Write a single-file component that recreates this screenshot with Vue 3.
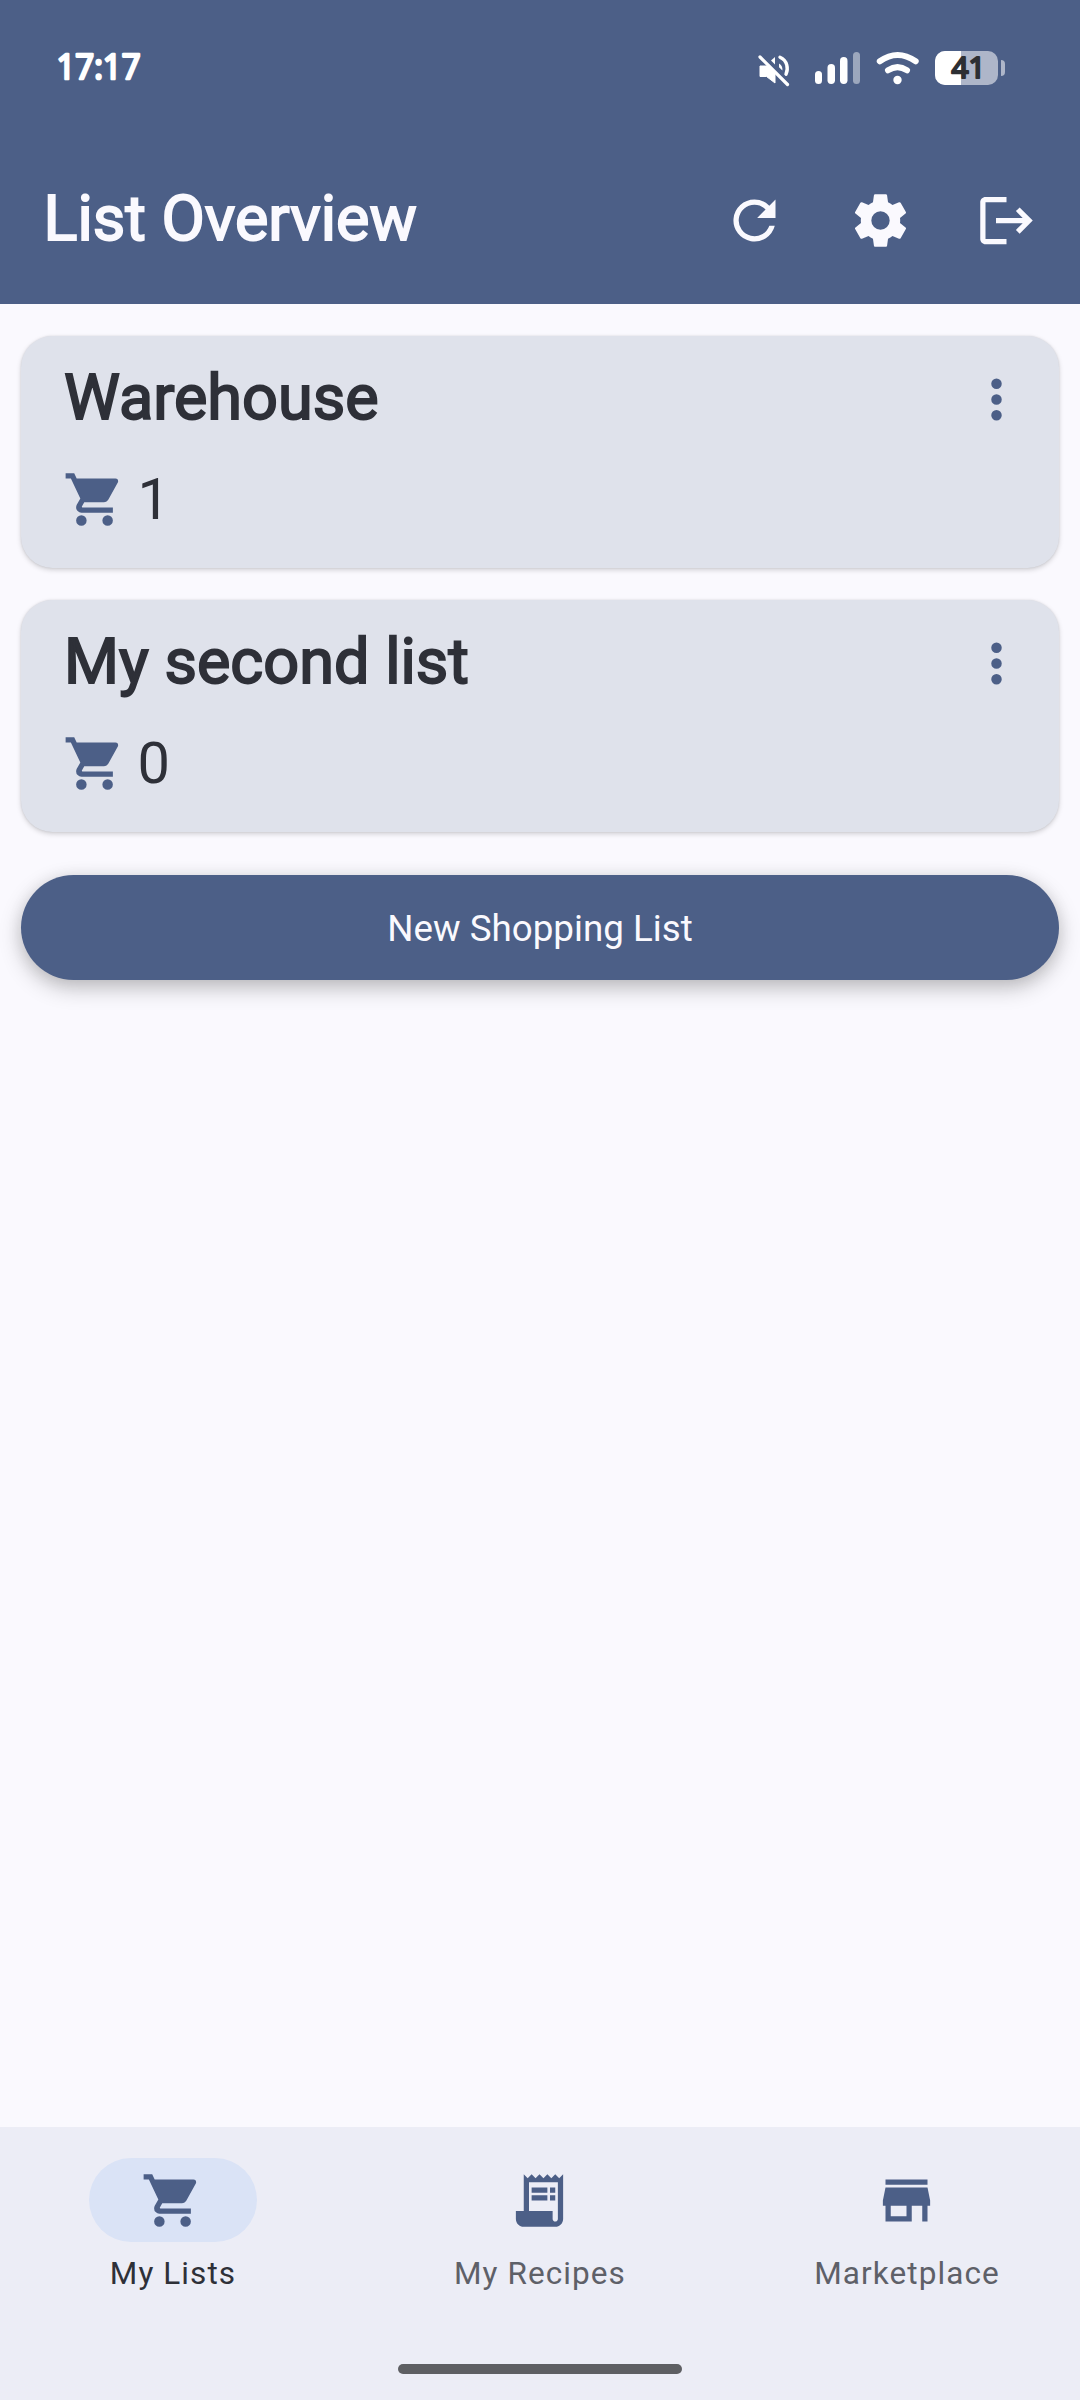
<script setup>
const icons = {
  refresh: 'M17.65 6.35A7.96 7.96 0 0 0 12 4a8 8 0 1 0 7.73 10h-2.08A6 6 0 1 1 12 6c1.66 0 3.14.69 4.22 1.78L13 11h7V4l-2.35 2.35z',
  cog: 'M12 15.5A3.5 3.5 0 0 1 8.5 12 3.5 3.5 0 0 1 12 8.5a3.5 3.5 0 0 1 3.5 3.5 3.5 3.5 0 0 1-3.5 3.5m7.43-2.53c.04-.32.07-.64.07-.97s-.03-.66-.07-1l2.11-1.63c.19-.15.24-.42.12-.64l-2-3.46c-.12-.22-.39-.31-.61-.22l-2.49 1c-.52-.39-1.06-.73-1.69-.98l-.37-2.65A.506.506 0 0 0 14 2h-4c-.25 0-.46.18-.5.42l-.37 2.65c-.63.25-1.17.59-1.69.98l-2.49-1c-.22-.09-.49 0-.61.22l-2 3.46c-.13.22-.07.49.12.64L4.57 11c-.04.34-.07.67-.07 1s.03.65.07.97l-2.11 1.66c-.19.15-.25.42-.12.64l2 3.46c.12.22.39.3.61.22l2.49-1.01c.52.4 1.06.74 1.69.99l.37 2.65c.04.24.25.42.5.42h4c.25 0 .46-.18.5-.42l.37-2.65c.63-.26 1.17-.59 1.69-.99l2.49 1.01c.22.08.49 0 .61-.22l2-3.46c.12-.22.07-.49-.12-.64l-2.11-1.66z',
  logout: 'M17 7l-1.41 1.41L18.17 11H8v2h10.17l-2.58 2.58L17 17l5-5M4 5h8V3H4c-1.1 0-2 .9-2 2v14c0 1.1.9 2 2 2h8v-2H4V5z',
  more: 'M12 16a2 2 0 1 1 0 4 2 2 0 0 1 0-4m0-6a2 2 0 1 1 0 4 2 2 0 0 1 0-4m0-6a2 2 0 1 1 0 4 2 2 0 0 1 0-4z',
  cart: 'M17 18a2 2 0 1 1 0 4 2 2 0 0 1 0-4M1 2h3.27l.94 2H20a1 1 0 0 1 1 1c0 .17-.05.34-.12.5l-3.58 6.47c-.34.61-1 1.03-1.75 1.03H8.1l-.9 1.63-.03.12a.25.25 0 0 0 .25.25H19v2H7a2 2 0 0 1-2-2c0-.35.09-.68.24-.96l1.36-2.45L3 4H1V2m6 16a2 2 0 1 1 0 4 2 2 0 0 1 0-4z',
  receipt: 'M19.5 3.5L18 2l-1.5 1.5L15 2l-1.5 1.5L12 2l-1.5 1.5L9 2 7.5 3.5 6 2v14H3v3c0 1.66 1.34 3 3 3h12c1.66 0 3-1.34 3-3V2l-1.5 1.5zM19 19c0 .55-.45 1-1 1s-1-.45-1-1v-3H8V5h11v14zM9 7h6v2H9zM16 7h2v2h-2zM9 10h6v2H9zM16 10h2v2h-2z',
  store: 'M20 4H4v2h16V4zm1 10v-2l-1-5H4l-1 5v2h1v6h10v-6h4v6h2v-6h1zm-9 4H6v-4h6v4z',
}
const actions = ['refresh', 'cog', 'logout']
const lists = [
  { name: 'Warehouse', count: 1 },
  { name: 'My second list', count: 0 },
]
const tabs = [
  { label: 'My Lists', icon: 'cart', active: true },
  { label: 'My Recipes', icon: 'receipt', active: false },
  { label: 'Marketplace', icon: 'store', active: false },
]
</script>

<template>
  <div class="screen">
    <header class="top">
      <div class="status">
        <svg class="clock" width="100" height="72" viewBox="0 0 100 72">
          <text x="3.500" y="47.200" textLength="84" lengthAdjust="spacingAndGlyphs">17:17</text>
        </svg>
        <div class="indicators">
          <svg class="mute" width="32" height="34" viewBox="0 0 32 34">
            <path d="M2 13h6l2 0 7 7v10l-8.500-6.500H2z" fill="#fff" stroke="#fff" stroke-width="1" stroke-linejoin="round" />
            <path d="M13 7.500l4-3.500v7.500z" fill="#fff" />
            <path d="M21 10.500q3.800 2 3.400 7l-3.400-3.200z" fill="#fff" />
            <path d="M22 4.200c7.500 3.200 8.500 11.500 6 17" fill="none" stroke="#fff" stroke-width="3.400" stroke-linecap="round" />
            <path d="M3.500 1.500l28 28" stroke="#4c5f87" stroke-width="3" />
            <path d="M2 4l27.500 27.500" stroke="#fff" stroke-width="3.200" stroke-linecap="round" />
          </svg>
          <svg class="signal" width="45" height="34" viewBox="0 0 45 34" fill="#fff">
            <rect x="0" y="20" width="7" height="13" rx="3.500" />
            <rect x="12.500" y="13" width="7.500" height="20" rx="3.700" />
            <rect x="25" y="6" width="7.500" height="27" rx="3.700" />
            <rect x="38" y="1" width="7" height="32" rx="3.500" opacity=".45" />
          </svg>
          <svg class="wifi" width="44" height="34" viewBox="0 0 44 34" fill="none" stroke="#fff" stroke-linecap="round">
            <path d="M3.800 10.300Q21.500-2.300 39.700 10.300" stroke-width="6" />
            <path d="M12 19.300q9.500-6.300 19 0" stroke-width="6" />
            <circle cx="21.500" cy="29" r="4.200" fill="#fff" stroke="none" />
          </svg>
          <svg class="battery" width="71" height="66" viewBox="0 -16 71 66">
            <path d="M10 0H53a10 10 0 0 1 10 10v14a10 10 0 0 1-10 10H10A10 10 0 0 1 0 24V10A10 10 0 0 1 10 0z" fill="#aeb6c9" />
            <path d="M10 0H26V34H10A10 10 0 0 1 0 24V10A10 10 0 0 1 10 0z" fill="#fff" />
            <path d="M66 9q4 0 4 4v8q0 4-4 4z" fill="#aeb6c9" />
            <text x="16.500" y="27.200" textLength="34" lengthAdjust="spacingAndGlyphs">41</text>
          </svg>
        </div>
      </div>
      <div class="appbar">
        <h1 class="heading">List Overview</h1>
        <nav class="actions">
          <svg v-for="a in actions" :key="a" class="icon" viewBox="0 0 24 24"><path :d="icons[a]" /></svg>
        </nav>
      </div>
    </header>

    <main class="content">
      <section v-for="l in lists" :key="l.name" class="card">
        <div class="card-head">
          <h2 class="heading">{{ l.name }}</h2>
          <svg class="icon" viewBox="0 0 24 24"><path :d="icons.more" /></svg>
        </div>
        <div class="card-count">
          <svg class="icon" viewBox="0 0 24 24"><path :d="icons.cart" /></svg>
          <span>{{ l.count }}</span>
        </div>
      </section>
      <button class="new">New Shopping List</button>
    </main>

    <footer class="bottom">
      <div class="tabs">
        <div v-for="t in tabs" :key="t.label" class="tab" :class="{ active: t.active }">
          <span class="pill"><svg class="icon" viewBox="0 0 24 24"><path :d="icons[t.icon]" /></svg></span>
          <span class="label">{{ t.label }}</span>
        </div>
      </div>
      <div class="handle"></div>
    </footer>
  </div>
</template>

<style>
body { margin: 0; }
</style>

<style scoped>
.screen {
  width: 1080px;
  height: 2400px;
  display: flex;
  flex-direction: column;
  background: #faf9fe;
  color: #2e3038;
  font-family: Roboto, "Liberation Sans", sans-serif;
  overflow: hidden;
}
.icon { width: 63px; height: 63px; display: block; fill: #4c5f87; flex: none; }
.heading {
  margin: 0;
  padding-bottom: 2px;
  font-size: 63px;
  line-height: 82px;
  font-weight: 400;
  -webkit-text-stroke: 1.9px currentColor;
  white-space: nowrap;
}
.top { height: 304px; background: #4c5f87; color: #faf9fe; flex: none; }
.status {
  height: 136px;
  box-sizing: border-box;
  padding: 32px 74px 0 53px;
  display: flex;
  justify-content: space-between;
  align-items: flex-start;
}
.clock text {
  font: 400 34.5px "Open Sans", sans-serif;
  fill: #fff;
  stroke: #fff;
  stroke-width: 2.7px;
  stroke-linejoin: round;
}
.indicators { display: flex; align-items: flex-start; padding-top: 3px; }
.mute { margin-right: 25px; margin-top: 18px; }
.signal { margin-right: 16px; margin-top: 16px; }
.wifi { margin-right: 15px; margin-top: 16px; }
.battery text {
  font: 400 28.5px "Open Sans", sans-serif;
  fill: #2d2f33;
  stroke: #2d2f33;
  stroke-width: 2.2px;
  stroke-linejoin: round;
}
.appbar {
  height: 168px;
  box-sizing: border-box;
  padding: 0 42px 0 43.5px;
  display: flex;
  align-items: center;
  justify-content: space-between;
}
.actions { display: flex; gap: 63px; }
.actions .icon { fill: #faf9fe; }
.content {
  flex: 1;
  display: flex;
  flex-direction: column;
  padding: 31.5px 21px 0;
}
.card {
  height: 232.5px;
  margin-bottom: 31.5px;
  box-sizing: border-box;
  padding: 21px 31.5px 0 43px;
  border-radius: 31.5px;
  background: #dfe2eb;
  box-shadow: 0 2px 5px rgba(0, 0, 0, .17), 0 0 2px rgba(0, 0, 0, .1);
}
.card-head { display: flex; justify-content: space-between; align-items: center; height: 84px; }
.card-head .icon { margin-top: 2px; }
.card-count { display: flex; align-items: center; margin: 27px 0 0 -1px; height: 63px; gap: 11.5px; font-size: 57.75px; line-height: 63px; }
.new {
  margin-top: 11px;
  height: 105px;
  padding: 3px 6px 0;
  border: 0;
  border-radius: 52.5px;
  background: #4c5f87;
  color: #faf9fe;
  font: 400 36.75px/52px Roboto, "Liberation Sans", sans-serif;
  box-shadow: 0 8px 22px rgba(0, 0, 0, .23), 0 2px 16px rgba(0, 0, 0, .08);
}
.bottom {
  height: 273px;
  flex: none;
  box-sizing: border-box;
  padding-top: 31px;
  background: #ecedf6;
  display: flex;
  flex-direction: column;
  align-items: center;
}
.tabs { display: flex; gap: 21px; width: 100%; height: 206px; }
.tab { flex: 1; display: flex; flex-direction: column; align-items: center; color: #5e6068; }
.tab.active { color: #2e3038; }
.pill { width: 168px; height: 84px; border-radius: 42px; display: flex; align-items: center; justify-content: center; }
.pill .icon { margin-right: 2px; }
.active .pill { background: #dae3f6; }
.label { margin-top: 11px; font-size: 31.5px; line-height: 42px; letter-spacing: 1.08px; }
.handle { width: 284px; height: 10px; border-radius: 5px; background: #5e5f63; }
</style>
